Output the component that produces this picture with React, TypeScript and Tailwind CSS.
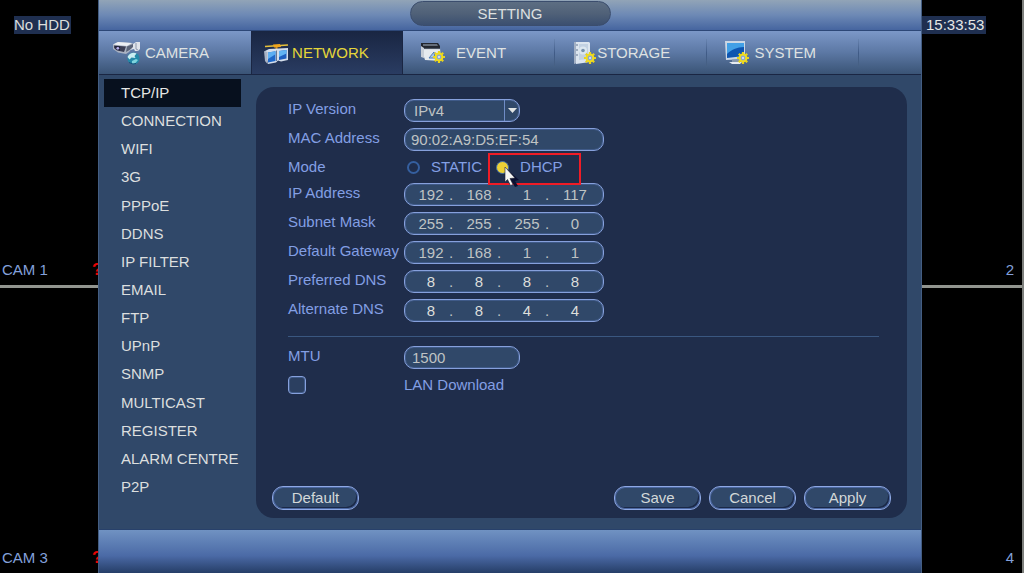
import { useState } from "react";
import type { ReactNode } from "react";

function Gear({ x, y }: { x: number; y: number }) {
  return (
    <g transform={`translate(${x} ${y})`}>
      <g stroke="#e9d31c" strokeWidth="2.2">
        <path d="M0-6V6M-6 0H6M-4.2-4.2L4.2 4.2M-4.2 4.2L4.2-4.2" />
      </g>
      <circle r="3.4" fill="#8fa9cc" stroke="#f0dc1e" strokeWidth="2" />
      <circle r="1" fill="#e8eefa" />
    </g>
  );
}

function CameraIcon() {
  return (
    <svg viewBox="0 0 28 24" className="h-6 w-7" aria-hidden="true">
      <path d="M0 3.500l5-2.500 14 1 3 2-6 7-3 2-8-1.500L0 8z" fill="#aab2c2" />
      <path d="M0 3.500l5-2.500 14 1-5 3z" fill="#eceff3" />
      <path d="M1 4.500l12 1-2 5.500-7-1.500L1 7z" fill="#3d4055" />
      <path d="M2 5l5 .5v4l-4-1z" fill="#1d1e38" />
      <circle cx="4.800" cy="7.300" r="1.400" fill="#b9b2ee" />
      <path d="M14 5.500l6-2.500v4l-7 4z" fill="#5b6478" />
      <path d="M20 3l3-2h4v7l-2 2h-3l-1-2-4 1 3-3z" fill="#dfe3ea" />
      <path d="M23 2v6l2 1" stroke="#8d98ab" fill="none" />
      <circle cx="20.500" cy="17.500" r="6" fill="#2389a8" />
      <path d="M14.500 16c2-4 6-5 9-3.500l-2 2.500 1 2-4-.5-2 2z" fill="#c9eef2" />
      <path d="M19 20l4-2 2 1-3 3.500-3 .5z" fill="#7fd3dc" />
      <path d="M16 21.500l4 1.500 3-.5" stroke="#164e78" fill="none" />
    </svg>
  );
}

function NetworkIcon() {
  return (
    <svg viewBox="0 0 28 24" className="h-6 w-7" aria-hidden="true">
      <path d="M1 5.500L24 4" stroke="#e7c23a" strokeWidth="1.600" />
      <path d="M9 3.500l7-.5 1 3-7 .5z" fill="#f0a51c" />
      <path d="M12.500 6v3" stroke="#d9911a" strokeWidth="2" />
      <path d="M1 10l4-2 19-1v12l-7 1.500-3-1-2 2-8 1.500z" fill="#d5deeb" />
      <path d="M0 10l3.500 1v12L1 20z" fill="#a9b4c6" />
      <path d="M4 11.500l7.500-1.200v9.700L4 21.500z" fill="#1f68c9" />
      <path d="M4 11.500l7.500-1.200v3L4 18z" fill="#5caef2" />
      <path d="M15 10l7.500-1v8.500L15 19z" fill="#1f5fc0" />
      <path d="M15 10l7.500-1v3.500L15 16z" fill="#62b4f4" />
      <path d="M12.500 9.500v10.500" stroke="#687891" />
    </svg>
  );
}

function EventIcon() {
  return (
    <svg viewBox="0 0 28 24" className="h-6 w-7" aria-hidden="true">
      <path d="M4 2h17l2 3v3H4z" fill="#22262e" />
      <path d="M6 3h14l1 2H6z" fill="#656d78" />
      <path d="M4 5l3 2v10l-3-1z" fill="#c8ced7" />
      <path d="M7 7h16l1 13-16-1-1-3z" fill="#e6eaef" />
      <path d="M7 7.500h16" stroke="#4b5361" strokeWidth="1.200" />
      <path d="M12 17l5-6 1 6z" fill="#a9c6ea" stroke="#4f7cb8" />
      <Gear x={22} y={16} />
    </svg>
  );
}

function StorageIcon() {
  return (
    <svg viewBox="0 0 28 24" className="h-6 w-7" aria-hidden="true">
      <path d="M5 1l3 0v21l-3 1z" fill="#a3b0c4" />
      <path d="M7 1h13l1 1v19l-14 2z" fill="#dce5ef" />
      <path d="M10 3h9v15l-9 1z" fill="#c2d1e2" />
      <circle cx="14" cy="9.500" r="4" fill="#dce7f0" />
      <circle cx="14" cy="9.500" r="1.800" fill="#7792ad" />
      <path d="M8 3v2M8 8v2M8 13v2" stroke="#637791" />
      <Gear x={21} y={17} />
    </svg>
  );
}

function SystemIcon() {
  return (
    <svg viewBox="0 0 28 24" className="h-6 w-7" aria-hidden="true">
      <path d="M4 0h20v18l-19 1z" fill="#cbd7e5" />
      <path d="M6 2h17v13L6 17z" fill="#0e55b1" />
      <path d="M6 2h17v4C16 6 10 9 6 13z" fill="#42a0e6" />
      <path d="M11 18.500h7v3h-7z" fill="#8798ad" />
      <path d="M8 21h13l-2 2h-8z" fill="#e5eaf0" />
      <Gear x={22} y={17} />
    </svg>
  );
}

const tabs: { label: string; icon: ReactNode }[] = [
  { label: "CAMERA", icon: <CameraIcon /> },
  { label: "NETWORK", icon: <NetworkIcon /> },
  { label: "EVENT", icon: <EventIcon /> },
  { label: "STORAGE", icon: <StorageIcon /> },
  { label: "SYSTEM", icon: <SystemIcon /> },
];

const sections = [
  "TCP/IP", "CONNECTION", "WIFI", "3G", "PPPoE", "DDNS", "IP FILTER", "EMAIL",
  "FTP", "UPnP", "SNMP", "MULTICAST", "REGISTER", "ALARM CENTRE", "P2P",
];

const addresses = [
  { label: "IP Address", octets: ["192", "168", "1", "117"], fixed: true },
  { label: "Subnet Mask", octets: ["255", "255", "255", "0"], fixed: true },
  { label: "Default Gateway", octets: ["192", "168", "1", "1"], fixed: true },
  { label: "Preferred DNS", octets: ["8", "8", "8", "8"], fixed: false },
  { label: "Alternate DNS", octets: ["8", "8", "4", "4"], fixed: false },
];

const field =
  "h-[23px] rounded-[10px] border border-[#86a0dc] bg-[#304869] text-[#bfc3c4] shadow-[inset_0_0_0_1px_#3f5a88]";

function Row({ label, htmlFor, children }: { label: string; htmlFor: string; children: ReactNode }) {
  return (
    <div className="flex h-[29px] items-center">
      <label htmlFor={htmlFor} className="w-[116px] shrink-0 pb-[3px] whitespace-nowrap text-[#839fe4]">
        {label}
      </label>
      {children}
    </div>
  );
}

function Action({ children }: { children: ReactNode }) {
  return (
    <button
      type="button"
      className="h-6 w-[87px] rounded-[11px] border border-[#8ea8e4] bg-[#304869] leading-5 text-[#d3d8d8] shadow-[inset_0_0_0_1px_#4a66a0,inset_-2px_-2px_0_#1b2947]"
    >
      {children}
    </button>
  );
}

function Channel({ name, lost, right, children }: { name: string; lost?: boolean; right?: boolean; children?: ReactNode }) {
  return (
    <section className="flex flex-1 flex-col justify-between overflow-hidden">
      <div>{children}</div>
      <div className={right ? "flex justify-end pr-2 pb-1.5" : "flex justify-between pb-1.5 pl-0.5"}>
        <span className="text-[#83a0dc]">{name}</span>
        {lost && <span className="w-[6px] overflow-hidden text-[17px] font-bold text-[#e80505]">?</span>}
      </div>
    </section>
  );
}

export default function App() {
  const [mode, setMode] = useState("DHCP");
  return (
    <div className="flex min-h-screen bg-black font-['Liberation_Sans',Arial,sans-serif] text-[15px] leading-[18px]">
      <aside className="flex w-[98px] shrink-0 flex-col">
        <Channel name="CAM 1" lost>
          <p className="mt-4 ml-3.5 w-[57px] bg-[#1f2f50] whitespace-nowrap text-[#dcdedc]">No HDD</p>
        </Channel>
        <hr className="h-[3px] border-0 bg-[#92958f]" />
        <Channel name="CAM 3" lost />
      </aside>

      <main className="flex min-w-0 flex-1 flex-col border-x border-[#435d82] bg-[#304869]">
        <header className="flex h-[31px] justify-center border-b border-[#2d4777] bg-linear-to-b from-[#92a4b7] via-[#6d89b5] to-[#46659f] pt-px">
          <h1 className="h-[25px] w-[201px] rounded-full border border-[#3b4d6d] bg-linear-to-b from-[#5d6e83] via-[#506178] via-50% to-[#3b4f70] text-center leading-[23px] text-[#dde0e0]">
            SETTING
          </h1>
        </header>

        <nav className="flex h-11 border-b border-[#1a2643] bg-linear-to-b from-[#7c98c8] via-[#5c78a4] to-[#3a5476]">
          {tabs.map(({ label, icon }) => (
            <a
              key={label}
              href={`#${label.toLowerCase()}`}
              className={
                label === "NETWORK"
                  ? "flex w-[18.5%] items-center border-x border-[#1a2643] bg-linear-to-b from-[#192642] to-[#2a3c62] pl-3 text-[#e5d63a]"
                  : "flex w-[18.5%] items-center pl-3.5 text-[#dfe2e2]"
              }
            >
              {icon}
              <span className="w-[72px] text-center whitespace-nowrap">{label}</span>
              {(label === "STORAGE" || label === "EVENT" || label === "SYSTEM") && (
                <span className="ml-auto h-7 w-px bg-linear-to-b from-[#6884b0] via-[#3f5a86] to-[#486284]" />
              )}
            </a>
          ))}
        </nav>

        <div className="flex flex-1">
          <nav className="flex w-[157px] shrink-0 flex-col pt-1 pr-[15px] pb-7 pl-[5px]">
            {sections.map((name) => (
              <a
                key={name}
                href={`#${name}`}
                className={
                  name === "TCP/IP"
                    ? "flex flex-1 items-center bg-[#07101e] pl-[17px] text-[#e6e7e6]"
                    : "flex flex-1 items-center pl-[17px] whitespace-nowrap text-[#dcdfdf]"
                }
              >
                {name}
              </a>
            ))}
          </nav>

          <form className="mt-3 mr-3.5 mb-[11px] flex flex-1 flex-col rounded-[18px] bg-[#1f2d4b] pt-[9px] pr-4 pb-2 pl-4">
            <div className="px-4">
              <Row label="IP Version" htmlFor="ip-version">
                <div className="relative">
                  <select id="ip-version" className={`${field} w-[116px] appearance-none pl-[9px]`}>
                    <option>IPv4</option>
                    <option>IPv6</option>
                  </select>
                  <span className="pointer-events-none absolute inset-y-px right-0 flex w-4 items-center border-l border-[#6f8cc6] pl-[3px]">
                    <svg viewBox="0 0 9 5" className="h-[5px] w-[9px]" aria-hidden="true">
                      <path d="M0 0h9L4.500 5z" fill="#e2e5e5" />
                    </svg>
                  </span>
                </div>
              </Row>
              <Row label="MAC Address" htmlFor="mac">
                <input id="mac" readOnly value="90:02:A9:D5:EF:54" className={`${field} w-[200px] pl-1.5`} />
              </Row>
              <fieldset className="flex h-[26px] items-center text-[#839fe4]">
                <legend className="float-left w-[116px]">Mode</legend>
                <label className="flex items-center gap-[11px] pl-[3px]">
                  <input
                    type="radio"
                    name="mode"
                    checked={mode === "STATIC"}
                    onChange={() => setMode("STATIC")}
                    className="size-[13px] appearance-none rounded-full border-2 border-[#355f9f] checked:bg-[#ecd136]"
                  />
                  STATIC
                </label>
                <label className="relative ml-3.5 flex items-center gap-[11px]">
                  <input
                    type="radio"
                    name="mode"
                    checked={mode === "DHCP"}
                    onChange={() => setMode("DHCP")}
                    className="size-[13px] appearance-none rounded-full border border-[#4470a8] checked:bg-[#ecd136]"
                  />
                  DHCP
                  <span className="pointer-events-none absolute -top-[5px] -left-2 h-8 w-[93px] border-2 border-[#f01c26]" />
                  <svg viewBox="0 0 16 21" className="pointer-events-none absolute top-[9px] left-2 h-[21px] w-4" aria-hidden="true">
                    <path d="M3 2l12 11-4 1 3 5-3 1-3-5-3 2z" fill="#0b1030" />
                    <path d="M1 0l10 11-5 .5 3 6-2.500 1-3-6L1 15z" fill="#f6f6f2" stroke="#222436" strokeWidth=".6" />
                  </svg>
                </label>
              </fieldset>
              {addresses.map(({ label, octets, fixed }) => (
                <Row key={label} label={label} htmlFor={`${label}-0`}>
                  <div className={`${field} flex w-[200px] items-center pl-2`}>
                    {octets.map((octet, i) => (
                      <span key={i} className="flex">
                        <input
                          id={`${label}-${i}`}
                          aria-label={`${label} part ${i + 1}`}
                          defaultValue={octet}
                          className={fixed ? "w-9 text-center" : "w-9 text-center text-[#dcdedb]"}
                        />
                        {i < 3 && <span className="w-3">.</span>}
                      </span>
                    ))}
                  </div>
                </Row>
              ))}
            </div>

            <hr className="mr-3 ml-4 mt-[11px] mb-[6px] border-[#3a5780]" />

            <div className="px-4">
              <Row label="MTU" htmlFor="mtu">
                <input id="mtu" defaultValue="1500" className={`${field} w-[116px] pl-[7px]`} />
              </Row>
              <div className="flex h-[26px] items-center text-[#839fe4]">
                <span className="flex w-[116px]">
                  <input
                    id="lan"
                    type="checkbox"
                    className="size-[18px] appearance-none rounded-[4px] border border-[#86a0dc] bg-[#2b3f60] shadow-[inset_0_0_0_1px_#3f5a88] checked:bg-[#ecd136]"
                  />
                </span>
                <label htmlFor="lan">LAN Download</label>
              </div>
            </div>

            <div className="mt-auto flex gap-2">
              <Action>Default</Action>
              <span className="flex-1" />
              <Action>Save</Action>
              <Action>Cancel</Action>
              <Action>Apply</Action>
            </div>
          </form>
        </div>

        <footer className="h-11 border-t border-[#28416b] bg-linear-to-b from-[#7092c2] via-[#4b6aa6] via-60% to-[#263e68]" />
      </main>

      <aside className="flex w-[102px] shrink-0 flex-col border-r-2 border-[#7d7f7c]">
        <Channel name="2" right>
          <p className="mt-4 w-16 bg-[#1f2f50] pl-1 text-[#e6e8e6]">15:33:53</p>
        </Channel>
        <hr className="h-[3px] border-0 bg-[#92958f]" />
        <Channel name="4" right />
      </aside>
    </div>
  );
}
